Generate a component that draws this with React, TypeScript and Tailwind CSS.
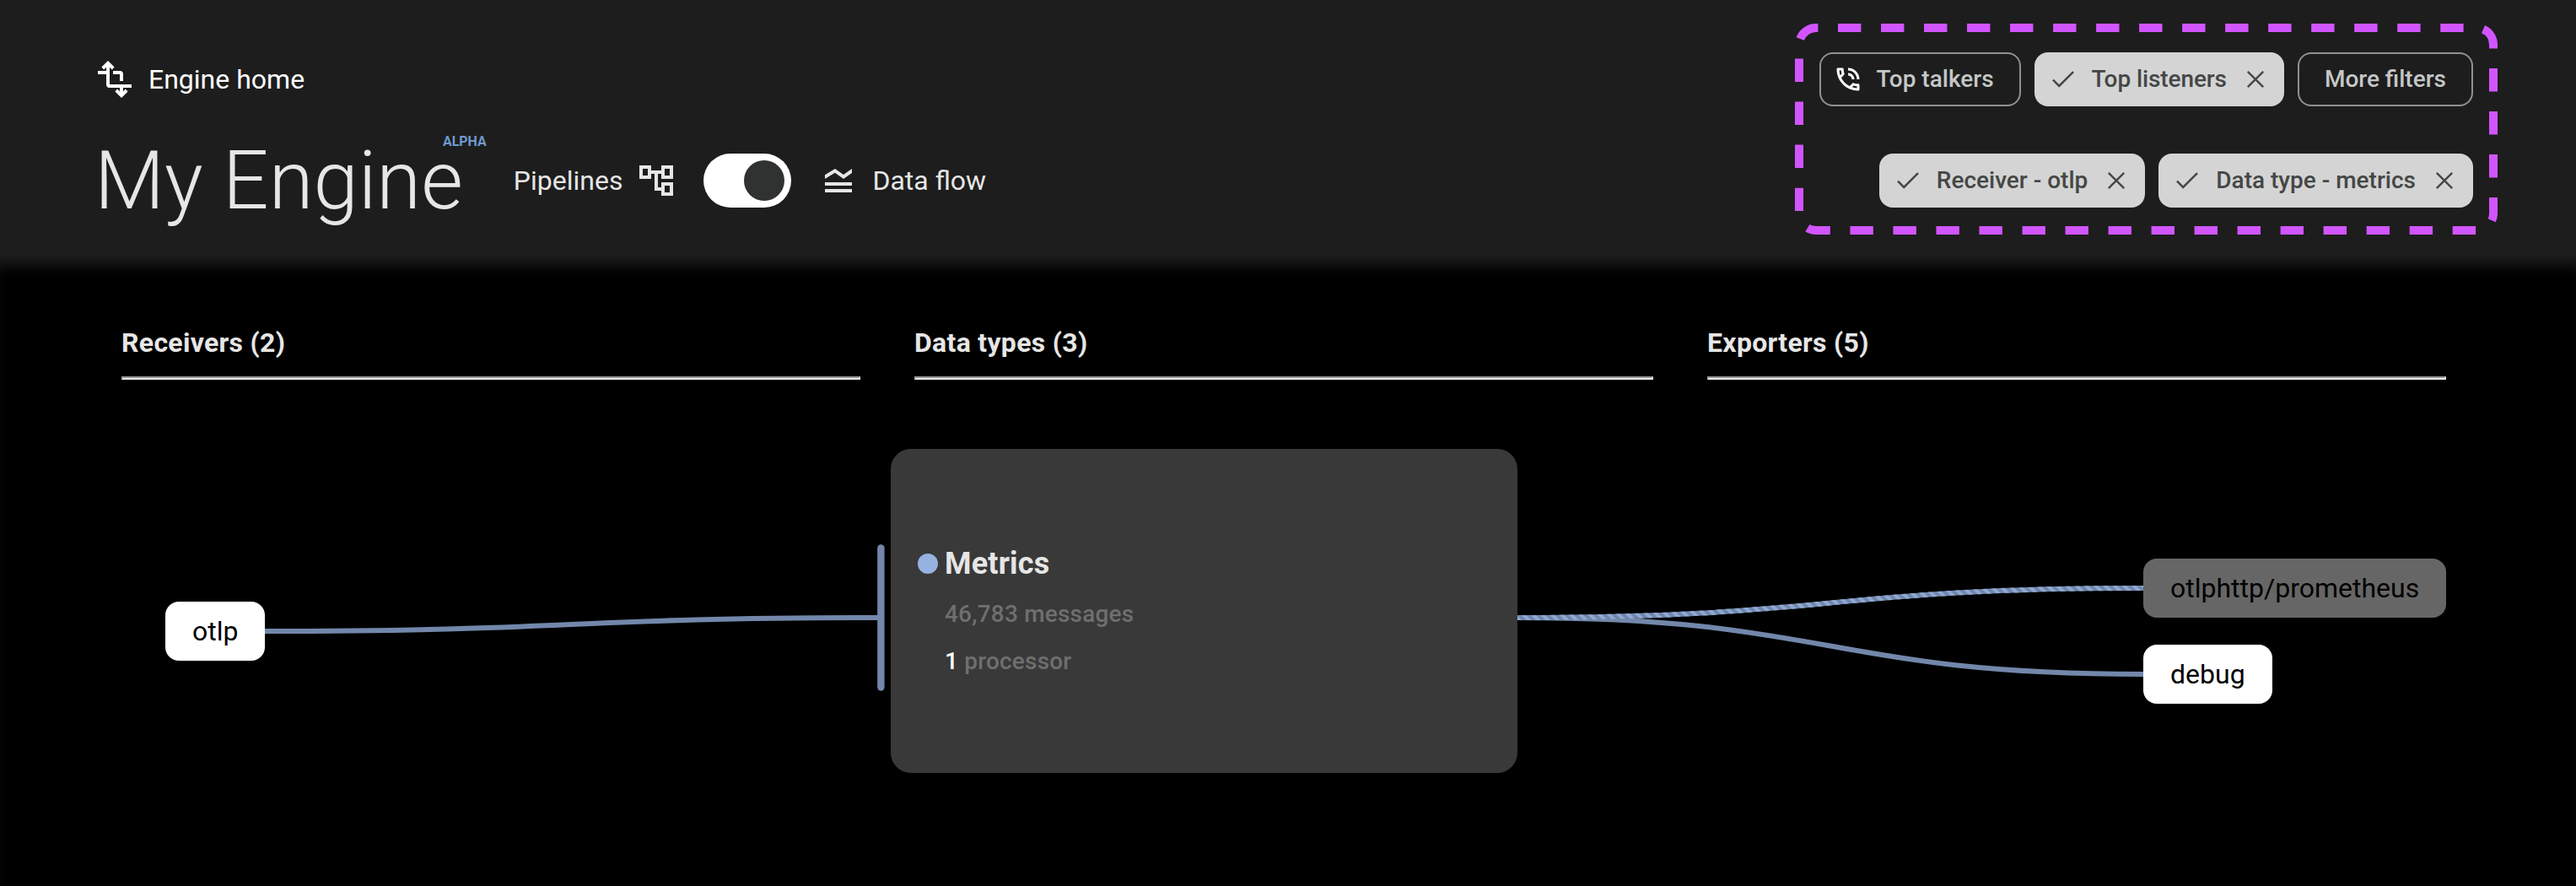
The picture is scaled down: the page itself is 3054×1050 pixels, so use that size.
import React from "react";

type IconProps = { className?: string };

const EngineIcon = ({ className }: IconProps) => (
  <svg viewBox="0 0 24 24" className={className} fill="none" stroke="currentColor" strokeWidth="2">
    <path d="M2 8h6M8 2.6V15q0 1 1 1h13M11 8h4q1 0 1 1v4M16 16v5.4" />
    <path d="M4.9 5.5 8 2.41l3.1 3.09M12.9 18.5l3.1 3.09 3.1-3.09" />
  </svg>
);

const TreeIcon = ({ className }: IconProps) => (
  <svg viewBox="0 0 24 24" className={className} fill="currentColor">
    <path d="M22 11V3h-7v3H9V3H2v8h7V8h2v10h4v3h7v-8h-7v3h-2V8h2v3h7zM7 9H4V5h3v4zm10 6h3v4h-3v-4zm0-10h3v4h-3V5z" />
  </svg>
);

const LegendIcon = ({ className }: IconProps) => (
  <svg viewBox="0 0 24 24" className={className} fill="currentColor">
    <path d="M20 15H4v-2h16v2zm0 2H4v2h16v-2zm-5-6 5-3.55V5l-5 3.55L10 5 4 8.66V11l5.92-3.61L15 11z" />
  </svg>
);

const PhoneIcon = ({ className }: IconProps) => (
  <svg viewBox="0 0 24 24" className={className} fill="currentColor">
    <path d="M15 12h2c0-2.76-2.24-5-5-5v2c1.66 0 3 1.34 3 3zm4 0h2c0-4.97-4.03-9-9-9v2c3.87 0 7 3.13 7 7zm1 3.5c-1.25 0-2.45-.2-3.57-.57-.1-.03-.21-.05-.31-.05-.26 0-.51.1-.71.29l-2.2 2.2c-2.83-1.44-5.15-3.75-6.59-6.58l2.2-2.21c.28-.27.36-.66.25-1.01C8.7 6.45 8.5 5.25 8.5 4c0-.55-.45-1-1-1H4c-.55 0-1 .45-1 1 0 9.39 7.61 17 17 17 .55 0 1-.45 1-1v-3.5c0-.55-.45-1-1-1zM5.03 5h1.5c.07.88.22 1.75.45 2.58l-1.2 1.21c-.4-1.21-.66-2.47-.75-3.79zM19 18.97c-1.32-.09-2.6-.35-3.8-.76l1.2-1.2c.85.24 1.72.39 2.6.45v1.51z" />
  </svg>
);

const CheckIcon = ({ className }: IconProps) => (
  <svg viewBox="0 0 36 36" className={className} fill="none" stroke="currentColor" strokeWidth="2.5">
    <path d="M6 18.7l7.2 7.2L30 9.1" />
  </svg>
);

const CloseIcon = ({ className }: IconProps) => (
  <svg viewBox="0 0 36 36" className={className} fill="none" stroke="currentColor" strokeWidth="2.4">
    <path d="M8.8 8.8l18.4 18.4M27.2 8.8L8.8 27.2" />
  </svg>
);

const OutlineChip = ({ label, icon }: { label: string; icon?: React.ReactNode }) => (
  <button
    className={`flex h-16 items-center gap-4 rounded-2xl border-2 border-[#8e9192] pr-[30px] text-[28px] font-medium text-[#c4c7c7] ${
      icon ? "pl-3.5" : "pl-[30px]"
    }`}
  >
    {icon}
    {label}
  </button>
);

const ActiveChip = ({ label, className = "" }: { label: string; className?: string }) => (
  <button
    className={`flex h-16 items-center gap-4 rounded-2xl bg-[#d4d4d4] px-4 text-[28px] font-medium text-[#444746] ${className}`}
  >
    <CheckIcon className="size-9" />
    {label}
    <CloseIcon className="size-9" />
  </button>
);

const Filters = () => (
  <div className="relative mt-[62px] flex flex-col items-end gap-14">
    <div className="flex gap-4">
      <OutlineChip label="Top talkers" icon={<PhoneIcon className="size-9 text-white" />} />
      <ActiveChip label="Top listeners" className="tracking-[-0.1px]" />
      <OutlineChip label="More filters" />
    </div>
    <div className="flex gap-4">
      <ActiveChip label="Receiver - otlp" />
      <ActiveChip label="Data type - metrics" />
    </div>
    <svg
      className="pointer-events-none absolute -top-[34px] -right-[29px] h-[250px] w-[833px]"
      viewBox="0 0 833 250"
      fill="none"
    >
      <rect
        x="5"
        y="5"
        width="823"
        height="240"
        rx="20"
        stroke="#d155ff"
        strokeWidth="10"
        strokeDasharray="27.4 23.617"
        strokeDashoffset="-26"
      />
    </svg>
  </div>
);

const ColumnHeading = ({ label }: { label: string }) => (
  <div>
    <h2 className="text-[32px] leading-[44px] font-bold tracking-[0.3px] text-[#e6e6e6]">{label}</h2>
    <div className="mt-[18px] border-2 border-t-[#999] border-r-[#e9e9e9] border-b-[#e9e9e9] border-l-[#999]" />
  </div>
);

const Node = ({ label, className }: { label: string; className: string }) => (
  <div className={`absolute flex h-[70px] items-center rounded-2xl px-8 text-[32px] text-black ${className}`}>
    {label}
  </div>
);

const Graph = () => (
  <div className="relative h-[600px]">
    <svg className="absolute inset-0 h-full w-full" viewBox="0 450 3054 600" fill="none">
      <defs>
        <pattern
          id="hatch"
          width="8"
          height="8"
          patternUnits="userSpaceOnUse"
          patternTransform="rotate(-45)"
        >
          <rect width="4" height="8" fill="#96b2e0" fillOpacity="0.8" />
        </pattern>
      </defs>
      <g stroke="#7287aa" strokeWidth="6">
        <path d="M314 748C677.5 748 677.5 732 1041 732" />
        <path d="M1799 732C2170 732 2170 799 2541 799" />
        <path d="M1799 732C2170 732 2170 697 2541 697" />
        <path d="M1799 732C2170 732 2170 697 2541 697" stroke="url(#hatch)" />
      </g>
      <rect x="1040.2" y="645.2" width="8.4" height="173.6" rx="4.2" fill="#7287aa" />
    </svg>
    <Node label="otlp" className="top-[263px] left-[196px] bg-white" />
    <div className="absolute top-[82px] left-[1056px] h-[384px] w-[743px] rounded-3xl bg-[#393939] px-8 pt-[114px]">
      <div className="flex items-center gap-2">
        <span className="size-6 rounded-full bg-[#96b2e0]" />
        <span className="text-[36px] leading-[44px] font-bold tracking-[0.2px] text-[#e6e6e6]">Metrics</span>
      </div>
      <div className="pl-8 text-[28px] leading-[56px] font-medium tracking-[0.2px] text-[#6f6f6f]">
        <div className="mt-2.5">46,783 messages</div>
        <div>
          <span className="text-white">1</span> processor
        </div>
      </div>
    </div>
    <Node label="otlphttp/prometheus" className="top-[212px] left-[2541px] bg-[#666]" />
    <Node label="debug" className="top-[314px] left-[2541px] bg-white" />
  </div>
);

export default function App() {
  return (
    <div className="flex h-[1050px] w-[3054px] flex-col overflow-hidden bg-black font-['Roboto',sans-serif]">
      <header className="flex h-[302px] shrink-0 items-start justify-between bg-[#1d1d1d] pr-[122px] pl-28">
        <div>
          <div className="mt-[70px] flex h-12 items-center gap-4 text-[32px] text-white">
            <EngineIcon className="size-12" />
            Engine home
          </div>
          <div className="mt-[40px] flex h-[112px] items-center text-[32px] text-[#e6e6e6]">
            <h1 className="relative text-[96px] leading-[112px] font-light">
              My Engine
              <span className="absolute top-0 -right-[28px] text-[16px] leading-5 font-bold text-[#7099d0]">ALPHA</span>
            </h1>
            <span className="ml-[60px]">Pipelines</span>
            <TreeIcon className="ml-4 size-12" />
            <div className="ml-8 flex h-16 w-[104px] items-center justify-end rounded-full bg-white pr-2">
              <span className="size-12 rounded-full bg-[#303131]" />
            </div>
            <LegendIcon className="ml-8 size-12" />
            <span className="ml-4">Data flow</span>
          </div>
        </div>
        <Filters />
      </header>
      <main className="flex-1 shadow-[inset_0_20px_16px_-8px_#1d1d1d]">
        <div className="grid grid-cols-[876px_876px_876px] gap-16 pt-[82px] pl-36">
          <ColumnHeading label="Receivers (2)" />
          <ColumnHeading label="Data types (3)" />
          <ColumnHeading label="Exporters (5)" />
        </div>
        <Graph />
      </main>
    </div>
  );
}
